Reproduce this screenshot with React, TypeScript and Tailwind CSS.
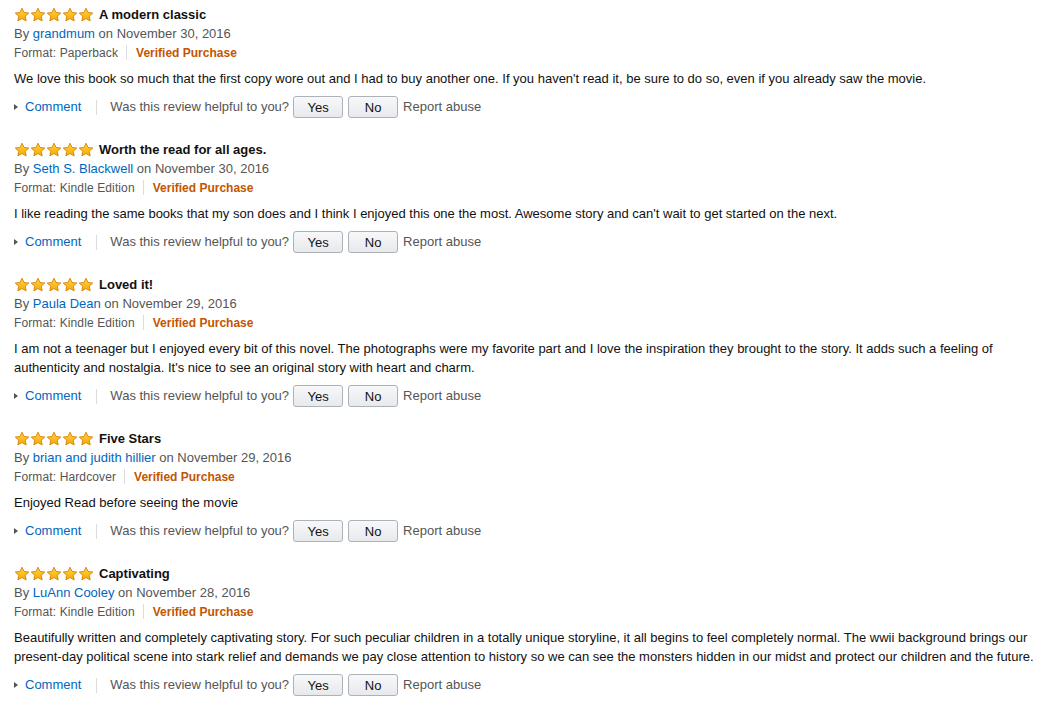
// App.tsx
// A list of customer reviews, each with stars, a title, author, format line,
// body text and a row of helpfulness actions.

type Review = {
  title: string;
  author: string;
  date: string;
  format: string;
  body: string;
};

const reviews: Review[] = [
  {
    title: "A modern classic",
    author: "grandmum",
    date: "November 30, 2016",
    format: "Paperback",
    body: "We love this book so much that the first copy wore out and I had to buy another one. If you haven't read it, be sure to do so, even if you already saw the movie.",
  },
  {
    title: "Worth the read for all ages.",
    author: "Seth S. Blackwell",
    date: "November 30, 2016",
    format: "Kindle Edition",
    body: "I like reading the same books that my son does and I think I enjoyed this one the most. Awesome story and can't wait to get started on the next.",
  },
  {
    title: "Loved it!",
    author: "Paula Dean",
    date: "November 29, 2016",
    format: "Kindle Edition",
    body: "I am not a teenager but I enjoyed every bit of this novel. The photographs were my favorite part and I love the inspiration they brought to the story. It adds such a feeling of authenticity and nostalgia. It's nice to see an original story with heart and charm.",
  },
  {
    title: "Five Stars",
    author: "brian and judith hillier",
    date: "November 29, 2016",
    format: "Hardcover",
    body: "Enjoyed Read before seeing the movie",
  },
  {
    title: "Captivating",
    author: "LuAnn Cooley",
    date: "November 28, 2016",
    format: "Kindle Edition",
    body: "Beautifully written and completely captivating story. For such peculiar children in a totally unique storyline, it all begins to feel completely normal. The wwii background brings our present-day political scene into stark relief and demands we pay close attention to history so we can see the monsters hidden in our midst and protect our children and the future.",
  },
];

function Star() {
  return (
    <svg width="16" height="16" viewBox="0 0 16 16">
      <defs>
        <linearGradient id="starFill" x1="0" y1="0" x2="0" y2="1">
          <stop offset="0" stopColor="#ffd54a" />
          <stop offset="1" stopColor="#f7a800" />
        </linearGradient>
      </defs>
      <path
        d="M8 1.2l2.05 4.3 4.7.55-3.5 3.2.95 4.65L8 11.55 3.8 13.9l.95-4.65-3.5-3.2 4.7-.55z"
        fill="url(#starFill)"
        stroke="#d87f00"
        strokeWidth="0.9"
        strokeLinejoin="round"
      />
    </svg>
  );
}

function Stars() {
  return (
    <div className="flex">
      {[0, 1, 2, 3, 4].map((i) => (
        <Star key={i} />
      ))}
    </div>
  );
}

function VoteButton({ label }: { label: string }) {
  return (
    <button className="h-[22px] w-[50px] rounded-[3px] border border-[#adb1b8] bg-gradient-to-b from-[#f7f8fa] to-[#e7e9ec] text-[13px] text-[#111] leading-none">
      {label}
    </button>
  );
}

function ReviewItem({ review }: { review: Review }) {
  return (
    <div className="mb-[22px]">
      {/* Rating and headline */}
      <div className="flex h-[19px] items-center gap-[5px]">
        <Stars />
        <span className="font-bold text-[#111]">{review.title}</span>
      </div>

      <div className="h-[19px] text-[#555]">
        By <span className="text-[#0066c0]">{review.author}</span> on {review.date}
      </div>

      <div className="flex h-[19px] items-center text-[12px] text-[#555]">
        <span className="tracking-[0.12px]">Format: {review.format}</span>
        <span className="ml-[8px] mr-[9px] h-[15px] w-px bg-[#ddd]" />
        <span className="font-bold text-[#c45500]">Verified Purchase</span>
      </div>

      <p className="mt-[7px] leading-[19px] text-[#111]">{review.body}</p>

      {/* Helpfulness actions */}
      <div className="mt-[8px] flex h-[22px] items-center text-[#555]">
        <span className="mr-[7px] h-0 w-0 border-y-[3.5px] border-l-[4px] border-y-transparent border-l-[#555]" />
        <span className="text-[#0066c0]">Comment</span>
        <span className="ml-[15px] mr-[13px] h-[15px] w-px bg-[#ddd]" />
        <span className="mr-[4px]">Was this review helpful to you?</span>
        <div className="flex gap-[5px]">
          <VoteButton label="Yes" />
          <VoteButton label="No" />
        </div>
        <span className="ml-[5px]">Report abuse</span>
      </div>
    </div>
  );
}

export default function App() {
  return (
    <div className="min-h-screen bg-white px-[14px] pt-[5px] text-[13px] font-['Arial','Liberation_Sans',sans-serif]">
      {reviews.map((r) => (
        <ReviewItem key={r.title} review={r} />
      ))}
    </div>
  );
}
